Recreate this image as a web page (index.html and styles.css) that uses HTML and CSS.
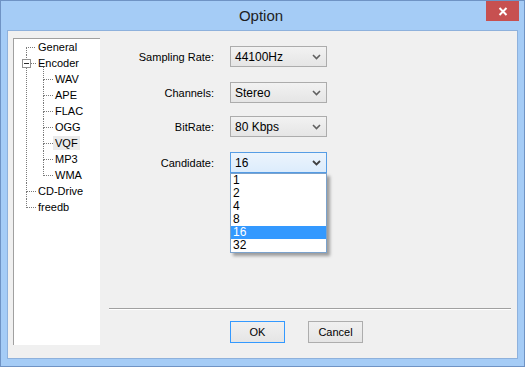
FILE: index.html
```html
<!DOCTYPE html>
<html lang="en">
<head>
  <meta charset="UTF-8" />
  <title>Option</title>
  <link rel="stylesheet" href="styles.css">
</head>
<body>

<div class="window">
  <div class="titlebar">
    <span></span>
    <span class="title">Option</span>
    <button class="close-btn">
      <svg width="10" height="9" viewBox="0 0 10 9"><path d="M1.5 1 L8.5 8 M8.5 1 L1.5 8" stroke="#fff" stroke-width="2"/></svg>
    </button>
  </div>

  <div class="client">
    <div class="tree">
      <ul class="root">
        <li><span>General</span></li>
        <li class="open">
          <i class="expander"></i>
          <span>Encoder</span>
          <ul class="sub">
            <li><span>WAV</span></li>
            <li><span>APE</span></li>
            <li><span>FLAC</span></li>
            <li><span>OGG</span></li>
            <li><span class="selected">VQF</span></li>
            <li><span>MP3</span></li>
            <li><span>WMA</span></li>
          </ul>
        </li>
        <li><span>CD-Drive</span></li>
        <li><span>freedb</span></li>
      </ul>
    </div>

    <div class="panel">
      <div class="form">
        <label>Sampling Rate:</label>
        <div class="combo"><span>44100Hz</span><svg class="chev" width="9" height="6" viewBox="0 0 9 6"><path d="M1 1 L4.5 4.5 L8 1" fill="none" stroke="#606060" stroke-width="1.6"/></svg></div>

        <label class="row2">Channels:</label>
        <div class="combo row2"><span>Stereo</span><svg class="chev" width="9" height="6" viewBox="0 0 9 6"><path d="M1 1 L4.5 4.5 L8 1" fill="none" stroke="#606060" stroke-width="1.6"/></svg></div>

        <label class="row3">BitRate:</label>
        <div class="combo row3"><span>80 Kbps</span><svg class="chev" width="9" height="6" viewBox="0 0 9 6"><path d="M1 1 L4.5 4.5 L8 1" fill="none" stroke="#606060" stroke-width="1.6"/></svg></div>

        <label class="row4">Candidate:</label>
        <div class="combo active row4"><span>16</span><svg class="chev" width="9" height="6" viewBox="0 0 9 6"><path d="M1 1 L4.5 4.5 L8 1" fill="none" stroke="#404040" stroke-width="1.8"/></svg>
          <ul class="dropdown">
            <li>1</li>
            <li>2</li>
            <li>4</li>
            <li>8</li>
            <li class="hl">16</li>
            <li>32</li>
          </ul>
        </div>
      </div>

      <div class="footer">
        <div class="separator"></div>
        <div class="buttons">
          <button class="btn default">OK</button>
          <button class="btn">Cancel</button>
        </div>
      </div>
    </div>
  </div>
</div>

</body>
</html>
```

FILE: styles.css
```css
* {
  box-sizing: border-box;
}

body {
  margin: 0;
  padding: 0;
  font-family: 'Liberation Sans', Arial, sans-serif;
  background: #a5ccf6;
}

.window {
  width: 525px;
  height: 367px;
  border: 1px solid #6f93c4;
  background: #a5ccf6;
  display: flex;
  flex-direction: column;
}

/* title bar */
.titlebar {
  height: 29px;
  display: grid;
  grid-template-columns: 1fr auto 1fr;
  align-items: start;
  padding-right: 5px;
}

.title {
  font-size: 15px;
  color: #1e1e1e;
  line-height: 29px;
  padding-left: 2px;
}

.close-btn {
  justify-self: end;
  width: 33px;
  height: 20px;
  border: none;
  padding: 0;
  margin: 0;
  background: #c75050;
  display: flex;
  align-items: center;
  justify-content: center;
}

/* client area */
.client {
  flex: 1;
  margin: 0 6px 7px 6px;
  border: 1px solid #8eb1dc;
  background: #f0f0f0;
  display: flex;
}

/* tree view */
.tree {
  width: 87px;
  margin: 7px 0 13px 5px;
  background: #fff;
  border-left: 1px solid #a0a0a0;
  border-top: 1px solid #a0a0a0;
  font-size: 11px;
  color: #000;
}

.tree ul {
  list-style: none;
  margin: 0;
  padding: 0;
}

.tree .root {
  margin-left: 12px;
}

.tree .sub {
  margin-left: 7px;
}

.tree li {
  position: relative;
  padding-left: 10px;
  line-height: 16px;
}

.tree li > span {
  padding: 1px 2px;
}

.tree li::before {
  content: "";
  position: absolute;
  left: 0;
  top: 0;
  width: 9px;
  height: 8px;
  border-left: 1px dotted #7a7a7a;
  border-bottom: 1px dotted #7a7a7a;
}

.tree li::after {
  content: "";
  position: absolute;
  left: 0;
  top: 8px;
  bottom: 0;
  border-left: 1px dotted #7a7a7a;
}

.tree li:last-child::after {
  display: none;
}

.tree .root > li:first-child::before {
  border-left: none;
}

.tree .sub > li:first-child::before {
  top: -4px;
  height: 12px;
}

.tree .selected {
  background: #ebebeb;
}

.expander {
  position: absolute;
  left: -4px;
  top: 4px;
  width: 9px;
  height: 9px;
  border: 1px solid #919191;
  background: #fff;
  z-index: 2;
}

.expander::after {
  content: "";
  position: absolute;
  left: 1px;
  top: 3px;
  width: 5px;
  height: 1px;
  background: #2b2b2b;
}

/* settings panel */
.panel {
  flex: 1;
  display: flex;
  flex-direction: column;
  padding: 15px 6px 15px 9px;
}

.form {
  display: grid;
  grid-template-columns: 105px 97px;
  column-gap: 16px;
  align-items: center;
}

.form label {
  text-align: right;
  font-size: 11px;
  color: #000;
}

.form .row2 {
  margin-top: 15px;
}

.form .row3 {
  margin-top: 13px;
}

.form .row4 {
  margin-top: 15px;
}

.combo {
  position: relative;
  height: 21px;
  border: 1px solid #acacac;
  background: linear-gradient(#f2f2f2, #e5e5e5);
  display: flex;
  align-items: center;
  justify-content: space-between;
  padding: 0 5px 0 4px;
  font-size: 12px;
  color: #000;
}

.combo.active {
  border-color: #569de5;
  background: linear-gradient(#ecf4fc, #dcecfc);
}

.chev {
  margin-top: 1px;
}

.dropdown {
  position: absolute;
  left: -1px;
  top: 20px;
  width: 97px;
  margin: 0;
  padding: 0;
  list-style: none;
  background: #fff;
  border: 1px solid #7ba2cc;
  box-shadow: 3px 3px 3px rgba(0, 0, 0, 0.35);
  z-index: 5;
}

.dropdown li {
  height: 13px;
  line-height: 13px;
  padding-left: 2px;
  font-size: 12px;
}

.dropdown li.hl {
  background: #3399ff;
  color: #fff;
}

/* footer */
.footer {
  margin-top: auto;
}

.separator {
  border-top: 1px solid #a0a0a0;
  border-bottom: 1px solid #fff;
}

.buttons {
  display: flex;
  gap: 23px;
  margin-top: 11px;
  padding-left: 121px;
}

.btn {
  width: 55px;
  height: 22px;
  border: 1px solid #adadad;
  background: linear-gradient(#f0f0f0, #e5e5e5);
  font-family: 'Liberation Sans', Arial, sans-serif;
  font-size: 11px;
  color: #000;
  padding: 0;
}

.btn.default {
  border-color: #3399ff;
}
```
